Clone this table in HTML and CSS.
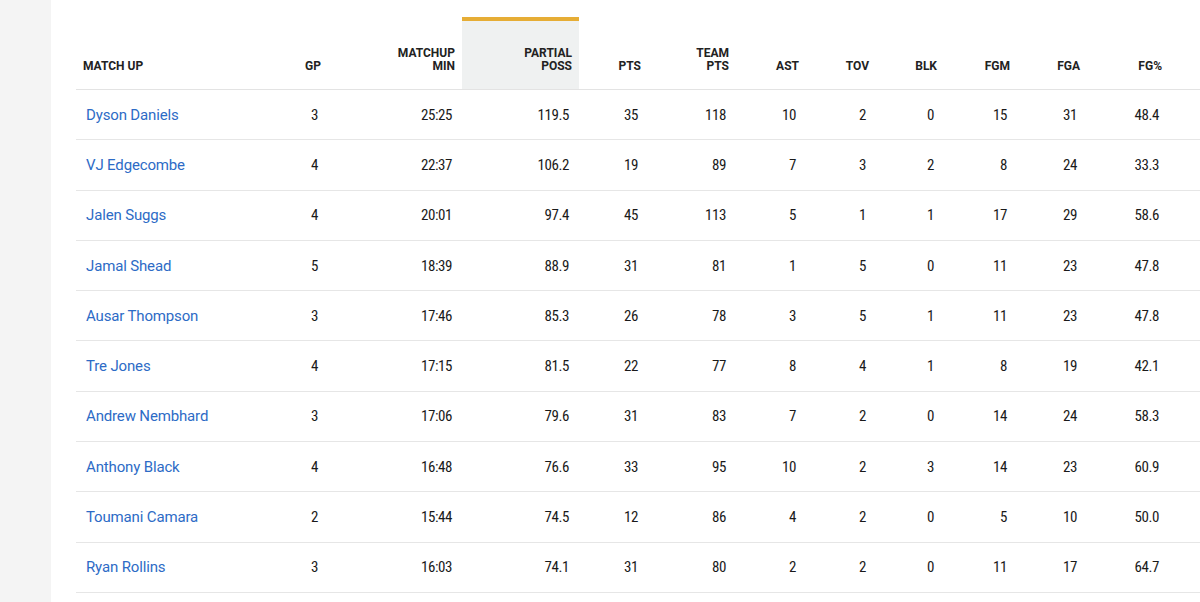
FILE: index.html
```html
<!DOCTYPE html>
<html lang="en">
<head>
<meta charset="utf-8">
<title>Matchups</title>
<link rel="stylesheet" href="styles.css">
</head>
<body>
<div class="page">
  <aside class="side"></aside>
  <main class="main">
    <table class="stats">
      <colgroup>
        <col class="c-name"><col class="c-gp"><col class="c-min"><col class="c-poss"><col class="c-pts"><col class="c-tpts"><col class="c-ast"><col class="c-tov"><col class="c-blk"><col class="c-fgm"><col class="c-fga"><col class="c-fgp"><col class="c-more">
      </colgroup>
      <thead>
        <tr>
          <th class="left">MATCH UP</th>
          <th>GP</th>
          <th>MATCHUP<br>MIN</th>
          <th class="sorted">PARTIAL<br>POSS</th>
          <th>PTS</th>
          <th>TEAM<br>PTS</th>
          <th>AST</th>
          <th>TOV</th>
          <th>BLK</th>
          <th>FGM</th>
          <th>FGA</th>
          <th>FG%</th>
          <th></th>
        </tr>
      </thead>
      <tbody>
        <tr><td class="name"><a href="#">Dyson Daniels</a></td><td>3</td><td>25:25</td><td>119.5</td><td>35</td><td>118</td><td>10</td><td>2</td><td>0</td><td>15</td><td>31</td><td>48.4</td><td></td></tr>
        <tr><td class="name"><a href="#">VJ Edgecombe</a></td><td>4</td><td>22:37</td><td>106.2</td><td>19</td><td>89</td><td>7</td><td>3</td><td>2</td><td>8</td><td>24</td><td>33.3</td><td></td></tr>
        <tr><td class="name"><a href="#">Jalen Suggs</a></td><td>4</td><td>20:01</td><td>97.4</td><td>45</td><td>113</td><td>5</td><td>1</td><td>1</td><td>17</td><td>29</td><td>58.6</td><td></td></tr>
        <tr><td class="name"><a href="#">Jamal Shead</a></td><td>5</td><td>18:39</td><td>88.9</td><td>31</td><td>81</td><td>1</td><td>5</td><td>0</td><td>11</td><td>23</td><td>47.8</td><td></td></tr>
        <tr><td class="name"><a href="#">Ausar Thompson</a></td><td>3</td><td>17:46</td><td>85.3</td><td>26</td><td>78</td><td>3</td><td>5</td><td>1</td><td>11</td><td>23</td><td>47.8</td><td></td></tr>
        <tr><td class="name"><a href="#">Tre Jones</a></td><td>4</td><td>17:15</td><td>81.5</td><td>22</td><td>77</td><td>8</td><td>4</td><td>1</td><td>8</td><td>19</td><td>42.1</td><td></td></tr>
        <tr><td class="name"><a href="#">Andrew Nembhard</a></td><td>3</td><td>17:06</td><td>79.6</td><td>31</td><td>83</td><td>7</td><td>2</td><td>0</td><td>14</td><td>24</td><td>58.3</td><td></td></tr>
        <tr><td class="name"><a href="#">Anthony Black</a></td><td>4</td><td>16:48</td><td>76.6</td><td>33</td><td>95</td><td>10</td><td>2</td><td>3</td><td>14</td><td>23</td><td>60.9</td><td></td></tr>
        <tr><td class="name"><a href="#">Toumani Camara</a></td><td>2</td><td>15:44</td><td>74.5</td><td>12</td><td>86</td><td>4</td><td>2</td><td>0</td><td>5</td><td>10</td><td>50.0</td><td></td></tr>
        <tr><td class="name"><a href="#">Ryan Rollins</a></td><td>3</td><td>16:03</td><td>74.1</td><td>31</td><td>80</td><td>2</td><td>2</td><td>0</td><td>11</td><td>17</td><td>64.7</td><td></td></tr>
      </tbody>
    </table>
  </main>
</div>
</body>
</html>
```
FILE: styles.css
```css
html, body {
  margin: 0;
  padding: 0;
  background: #ffffff;
  overflow: hidden;
}
.page {
  display: flex;
  width: 1200px;
  height: 602px;
  overflow: hidden;
}
.side {
  flex: 0 0 51px;
  background: #f4f4f4;
}
.main {
  flex: 1 1 auto;
  padding: 17px 0 0 25px;
  overflow: hidden;
}
.stats {
  border-collapse: collapse;
  table-layout: fixed;
  width: 1200px;
  font-family: Roboto, "Liberation Sans", Arial, sans-serif;
}
.c-name { width: 194px; }
.c-gp { width: 58px; }
.c-min { width: 134px; }
.c-poss { width: 117px; }
.c-pts { width: 69px; }
.c-tpts { width: 88px; }
.c-ast { width: 70px; }
.c-tov { width: 70px; }
.c-blk { width: 68px; }
.c-fgm { width: 73px; }
.c-fga { width: 70px; }
.c-fgp { width: 82px; }
.c-more { width: 207px; }

.stats th {
  font-size: 12px;
  line-height: 13px;
  font-weight: 700;
  color: #222222;
  text-align: right;
  vertical-align: bottom;
  padding: 0 7px 16px 0;
  height: 52px;
  border-top: 4px solid transparent;
  border-bottom: 1px solid #e3e3e3;
}
.stats th.left {
  text-align: left;
  padding-left: 7px;
}
.stats th.sorted {
  background: #eff1f1;
  border-top-color: #e6ad35;
}
.stats td {
  font-size: 15px;
  font-stretch: 85%;
  letter-spacing: -0.4px;
  color: #1a1a1a;
  text-align: right;
  vertical-align: middle;
  padding: 0 10px 0 0;
  height: 49.3px;
  border-bottom: 1px solid #e6e6e6;
}
.stats td.name {
  text-align: left;
  padding-left: 10px;
  font-stretch: 100%;
  letter-spacing: -0.15px;
}
.name a {
  color: #2d6bc6;
  text-decoration: none;
}
```
